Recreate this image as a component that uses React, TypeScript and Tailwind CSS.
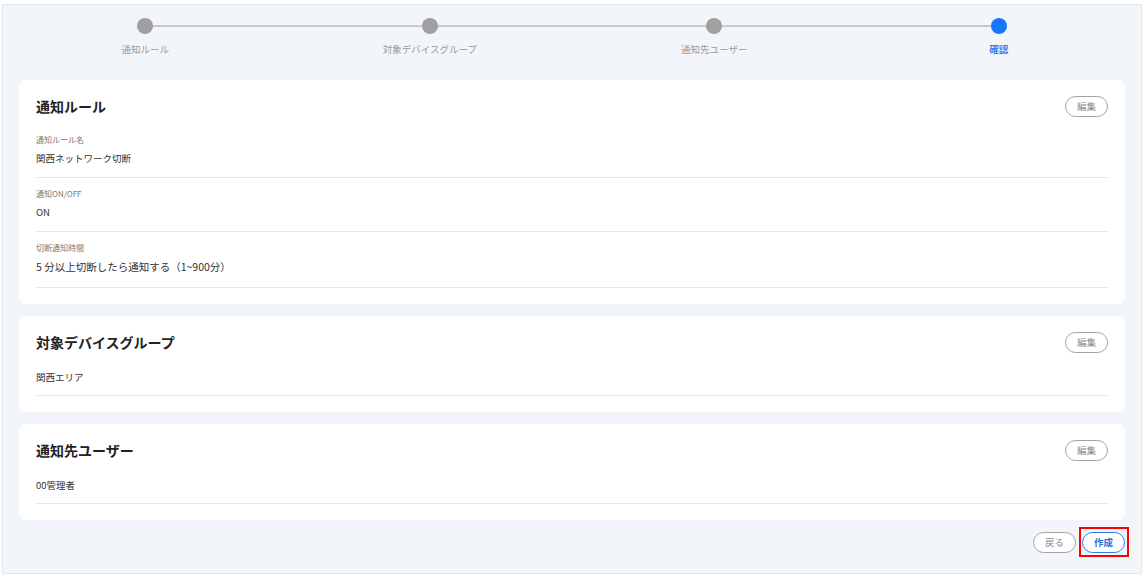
import React from "react";

const steps = ["通知ルール", "対象デバイスグループ", "通知先ユーザー", "確認"];

const font = { fontFamily: '"Noto Sans CJK JP", "Noto Sans", sans-serif' };

function EditButton() {
    return (
        <button className="h-[21px] w-[43px] rounded-full border-[1.5px] border-[#a3a3a3] bg-white text-[9.5px] leading-none text-[#8a8a8a]">
            編集
        </button>
    );
}

function CardHeader({ title }: { title: string }) {
    return (
        <div className="flex h-[21px] items-center justify-between">
            <h2 className="text-[14px] font-bold leading-[21px] text-[#222]">{title}</h2>
            <EditButton />
        </div>
    );
}

function Field({ label, value, big }: { label: string; value: string; big?: boolean }) {
    return (
        <div className="border-b border-[#e6e8eb] pt-[10px] pb-[12px]">
            <div className="text-[8px] leading-[12px] text-[#7a7a7a]">{label}</div>
            <div
                className={
                    big
                        ? "mt-[5px] text-[10.5px] leading-[16px] text-[#333]"
                        : "mt-[5px] text-[9.5px] leading-[14px] text-[#333]"
                }
            >
                {value}
            </div>
        </div>
    );
}

function SimpleCard({ title, value }: { title: string; value: string }) {
    return (
        <section className="rounded-[6px] bg-white px-[17px] pt-[16px] pb-[16px]">
            <CardHeader title={title} />
            <div className="mt-[17px] border-b border-[#e6e8eb] pb-[11px] text-[9.5px] leading-[14px] text-[#333]">
                {value}
            </div>
        </section>
    );
}

export default function App() {
    return (
        <div className="min-h-[578px] bg-white pt-[4px] pl-[2px]" style={font}>
            <div className="h-[570px] w-[1140px] border border-[#e2e5e9] bg-[#f2f5fa]">
                {/* Stepper */}
                <div className="relative grid h-[75px] grid-cols-4 pt-[13px]">
                    <div className="absolute top-[20px] right-[12.5%] left-[12.5%] h-[2px] bg-[#c8c8c8]" />
                    {steps.map((s, i) => {
                        const last = i === steps.length - 1;
                        return (
                            <div key={s} className="relative flex flex-col items-center">
                                <div
                                    className={
                                        last
                                            ? "h-[16px] w-[16px] rounded-full bg-[#1677ff]"
                                            : "h-[16px] w-[16px] rounded-full bg-[#a0a0a0]"
                                    }
                                />
                                <div
                                    className={
                                        last
                                            ? "mt-[8px] text-[9.5px] font-bold leading-[14px] text-[#3b7cf0]"
                                            : "mt-[8px] text-[9.5px] leading-[14px] text-[#9a9a9a]"
                                    }
                                >
                                    {s}
                                </div>
                            </div>
                        );
                    })}
                </div>

                <main className="flex flex-col gap-[12px] px-[16px]">
                    {/* 通知ルール */}
                    <section className="rounded-[6px] bg-white px-[17px] pt-[16px] pb-[16px]">
                        <CardHeader title="通知ルール" />
                        <div className="mt-[7px]">
                            <Field label="通知ルール名" value="関西ネットワーク切断" />
                            <Field label="通知ON/OFF" value="ON" />
                            <Field label="切断通知時間" value="5 分以上切断したら通知する（1~900分）" big />
                        </div>
                    </section>

                    <SimpleCard title="対象デバイスグループ" value="関西エリア" />
                    <SimpleCard title="通知先ユーザー" value="00管理者" />

                    {/* Actions */}
                    <div className="flex items-center justify-end gap-[6px]">
                        <button className="h-[21px] w-[43px] rounded-full border-[1.5px] border-[#a3a3a3] bg-white text-[9.5px] leading-none text-[#8a8a8a]">
                            戻る
                        </button>
                        <div className="relative flex">
                            <button className="h-[21px] w-[43px] rounded-full border-[1.5px] border-[#2f7bf5] bg-white text-[9.5px] font-bold leading-none text-[#2b6fd6]">
                                作成
                            </button>
                            <span className="pointer-events-none absolute top-[-5px] left-[-3px] h-[30px] w-[50px] border-2 border-[#ff0000]" />
                        </div>
                    </div>
                </main>
            </div>
        </div>
    );
}
